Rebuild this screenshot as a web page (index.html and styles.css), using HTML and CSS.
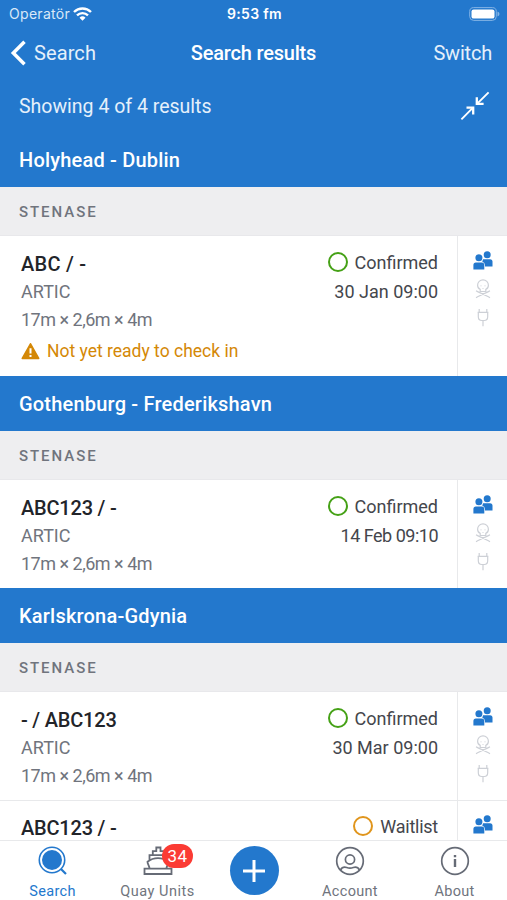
FILE: index.html
```html
<!DOCTYPE html>
<html lang="en">
<head>
<meta charset="utf-8">
<title>Search results</title>
<link rel="stylesheet" href="styles.css">
</head>
<body>
<svg class="sprite" width="0" height="0" aria-hidden="true">
  <symbol id="people" viewBox="0 0 20 19">
    <circle cx="14.2" cy="3.7" r="3.5"/>
    <path d="M9.6 8.3h7.4a2.5 2.5 0 0 1 2.5 2.5v4.7H9z"/>
    <circle class="cut" cx="5.9" cy="7" r="4.3"/>
    <path class="cut" d="M0 19v-5a3.6 3.6 0 0 1 3-3.2h6a3.6 3.6 0 0 1 3 3.2v5z"/>
    <circle cx="5.9" cy="6.8" r="3.5"/>
    <path d="M.4 18.6v-4.7a2.5 2.5 0 0 1 2.5-2.5h5.9a2.5 2.5 0 0 1 2.5 2.5v4.7z"/>
  </symbol>
  <symbol id="skull" viewBox="0 0 16 20">
    <path d="M5.2 10.4C3.4 9.6 2.6 8 2.6 6.2a5.4 5.4 0 0 1 10.8 0c0 1.8-.8 3.4-2.6 4.2v2.1H5.2zM6 6.5v.8M10 6.5v.8M8 9v.8M1 11.8l1.6.8 10.8 5.2 1.6.9M15 11.8l-1.6.8-10.8 5.2-1.6.9"/>
  </symbol>
  <symbol id="plug" viewBox="0 0 16 20">
    <path d="M4.2 1v3.3M11.8 1v3.3M2.6 4.4h10.8M3.3 4.4v4.1c0 2.5 1.5 4 3.5 4h2.4c2 0 3.5-1.5 3.5-4V4.4M8 12.5v5.8"/>
  </symbol>
</svg>
<div class="screen">
  <header class="top">
    <div class="status">
      <div class="carrier"><span>Operatör</span>
        <svg width="19" height="14" viewBox="0 0 19 14"><g fill="none" stroke="#fff" stroke-width="2.4"><path d="M1 5a12.2 12.2 0 0 1 17 0M4 8.3a8 8 0 0 1 11 0"/></g><path fill="#fff" d="M6.5 10.7a4.4 4.4 0 0 1 6 0l-3 3z"/></svg>
      </div>
      <span class="clock">9:53 fm</span>
      <svg class="battery" width="31" height="14" viewBox="0 0 31 14"><rect x=".7" y=".6" width="26.6" height="12.8" rx="4" fill="none" stroke="#83b3e5"/><rect x="2.5" y="2.4" width="23" height="9.2" rx="2.2" fill="#fff"/><path fill="#83b3e5" d="M28.5 4.5q2 .7 2 2.5t-2 2.5z"/></svg>
    </div>
    <nav class="nav">
      <div class="back"><svg width="18" height="26" viewBox="0 0 18 26"><path d="M14.5 1.8 3.3 13l11.2 11.2" fill="none" stroke="#fff" stroke-width="3.5"/></svg><span>Search</span></div>
      <h1>Search results</h1>
      <span class="switch">Switch</span>
    </nav>
    <div class="summary"><span>Showing 4 of 4 results</span>
      <svg width="30" height="30" viewBox="0 0 30 30" fill="none" stroke="#fff"><path stroke-width="1.9" d="M1.4 28.3 13 16.7M28.6 1.3 17 12.9"/><path stroke-width="2.3" d="M6.5 16.7h6.7v6.7M16.8 6.2v6.7h6.8"/></svg>
    </div>
  </header>
  <main class="results">
    <h2>Holyhead - Dublin</h2>
    <h3>STENASE</h3>
    <article class="booking warned">
      <div class="unit"><b class="short">ABC / -</b><span class="kind">ARTIC</span><span class="dims">17m × 2,6m × 4m</span>
        <div class="warning"><svg width="19" height="18" viewBox="0 0 19 18"><path d="M9.5 1.8 17.7 16.4H1.3z" fill="#d48806" stroke="#d48806" stroke-width="1.6" stroke-linejoin="round"/><path d="M9.5 6.2v5.2M9.5 13v2" stroke="#fff" stroke-width="2"/></svg><span>Not yet ready to check in</span></div>
      </div>
      <div class="state"><div class="status-line"><i class="ring"></i><span>Confirmed</span></div><span class="date">30 Jan 09:00</span></div>
      <div class="flags"><svg class="people"><use href="#people"/></svg><svg class="off"><use href="#skull"/></svg><svg class="off"><use href="#plug"/></svg></div>
    </article>
    <h2>Gothenburg - Frederikshavn</h2>
    <h3>STENASE</h3>
    <article class="booking">
      <div class="unit"><b>ABC123 / -</b><span class="kind">ARTIC</span><span class="dims">17m × 2,6m × 4m</span></div>
      <div class="state"><div class="status-line"><i class="ring"></i><span>Confirmed</span></div><span class="date narrow">14 Feb 09:10</span></div>
      <div class="flags"><svg class="people"><use href="#people"/></svg><svg class="off"><use href="#skull"/></svg><svg class="off"><use href="#plug"/></svg></div>
    </article>
    <h2>Karlskrona-Gdynia</h2>
    <h3>STENASE</h3>
    <article class="booking">
      <div class="unit"><b>- / ABC123</b><span class="kind">ARTIC</span><span class="dims">17m × 2,6m × 4m</span></div>
      <div class="state"><div class="status-line"><i class="ring"></i><span>Confirmed</span></div><span class="date">30 Mar 09:00</span></div>
      <div class="flags"><svg class="people"><use href="#people"/></svg><svg class="off"><use href="#skull"/></svg><svg class="off"><use href="#plug"/></svg></div>
    </article>
    <article class="booking next">
      <div class="unit"><b>ABC123 / -</b></div>
      <div class="state"><div class="status-line"><i class="ring waiting"></i><span class="wait">Waitlist</span></div></div>
      <div class="flags"><svg class="people"><use href="#people"/></svg></div>
    </article>
  </main>
  <footer class="tabs">
    <div class="tab active"><svg width="30" height="30" viewBox="0 0 30 30"><circle cx="14" cy="14" r="12.7" fill="none" stroke="#2378cd" stroke-width="1.6"/><circle cx="14" cy="14" r="10" fill="#2378cd"/><path d="m23 23 5 5" stroke="#2378cd" stroke-width="2.2"/></svg><span>Search</span></div>
    <div class="tab quay"><svg width="30" height="30" viewBox="0 0 30 30" fill="none" stroke="#666b76" stroke-width="1.8"><path d="M1.5 22.7h27v5.3h-27zM6.5 22.4c0-2.6-2-4-2-6.6 3.2-2.6 6.8-3.7 10.5-3.7s7.3 1.1 10.5 3.7c0 2.6-2 4-2 6.6M6.5 14V9.2h3.3V5.2h3.5V1.5h4.2v3.7H21v4h3.5V14M9.8 9.2H21"/></svg><em class="badge">34</em><span>Quay Units</span></div>
    <div class="add"><svg width="24" height="24" viewBox="0 0 24 24"><path d="M12 1v22M1 12h22" stroke="#fff" stroke-width="3"/></svg></div>
    <div class="tab"><svg width="30" height="30" viewBox="0 0 30 30" fill="none" stroke="#666b76" stroke-width="1.7"><circle cx="15" cy="15" r="13.3"/><circle cx="15" cy="13.5" r="4.6"/><path d="M5.5 24c1.2-2.2 3.6-3.4 6.2-2.5 2.2.8 4.4.8 6.6 0 2.6-.9 5 .3 6.2 2.5"/></svg><span>Account</span></div>
    <div class="tab"><svg width="30" height="30" viewBox="0 0 30 30" fill="none" stroke="#666b76"><circle cx="15" cy="15" r="13.3" stroke-width="1.7"/><path d="M15 9v2.2M15 13v8" stroke-width="2.4"/></svg><span>About</span></div>
  </footer>
</div>
</body>
</html>
```
FILE: styles.css
```css
* { box-sizing: border-box; }
body { margin: 0; font-family: Roboto, "Liberation Sans", sans-serif; color: #44464c; background: #fff; }
.sprite { position: absolute; }
.screen { width: 507px; height: 900px; display: flex; flex-direction: column; overflow: hidden; }
svg { display: block; flex: none; }
span, b, h1, h2, h3 { white-space: nowrap; }
.top { height: 132px; flex: none; background: #2378cd; color: #fff; }
.status { height: 27px; display: grid; grid-template-columns: 1fr auto 1fr; align-items: center; padding: 0 7px 0 9px; font-family: Inter, sans-serif; }
.carrier { display: flex; align-items: center; gap: 3px; font-size: 14px; letter-spacing: .3px; color: #d9e8f8; }
.clock { font-size: 14px; font-weight: 600; letter-spacing: .35px; }
.battery { justify-self: end; }
.nav { height: 51px; display: grid; grid-template-columns: 1fr auto 1fr; align-items: center; padding: 0 15px; }
.back { display: flex; align-items: center; gap: 6px; margin-left: -5px; font-size: 20px; letter-spacing: .1px; color: #e5f0fb; }
.switch { justify-self: end; font-size: 20px; letter-spacing: -.2px; color: #e5f0fb; }
h1 { margin: 0; font-size: 20px; font-weight: 500; letter-spacing: -.2px; }
.summary { height: 54px; display: flex; align-items: center; justify-content: space-between; padding: 2px 17px 0 19px; font-size: 19.5px; color: #e5f0fb; }
.results { height: 708px; flex: none; overflow: hidden; }
h2 { height: 55px; margin: 0; padding-left: 19px; background: #2378cd; color: #fff; font-size: 20px; font-weight: 500; line-height: 56px; letter-spacing: .2px; }
h3 { height: 49px; margin: 0; padding-left: 19px; background: #eeeef0; color: #70747d; font-size: 15px; font-weight: 500; line-height: 50px; letter-spacing: 1.95px; border-bottom: 1px solid #e8e8eb; }
.booking { height: 108px; display: flex; }
.warned { height: 140px; }
.next { border-top: 1px solid #e8e9eb; }
.next .unit { padding-top: 13px; }
.next .state { padding-top: 10px; }
.next .flags { padding-top: 14px; }
.unit { flex: 1; display: flex; flex-direction: column; padding: 14px 0 0 21px; color: #70747d; font-size: 18px; }
.unit b { font-size: 20px; font-weight: 500; line-height: 28px; letter-spacing: -.2px; color: #222429; }
.unit .short { letter-spacing: .25px; }
.kind { line-height: 28px; }
.dims { line-height: 27px; letter-spacing: -.5px; }
.warning { height: 36px; display: flex; align-items: center; gap: 7px; color: #d48806; font-size: 17.5px; }
.state { display: flex; flex-direction: column; align-items: flex-end; padding: 11px 19px 0 0; font-size: 18px; }
.status-line { height: 30px; display: flex; align-items: center; gap: 7px; }
.ring { width: 20px; height: 20px; border: 2px solid #45a116; border-radius: 50%; }
.waiting { border-color: #e0951c; }
.wait { letter-spacing: -.25px; }
.date { line-height: 30px; }
.narrow { letter-spacing: -.5px; }
.flags { width: 50px; border-left: 1px solid #e8e9eb; display: flex; flex-direction: column; align-items: center; gap: 9px; padding-top: 15px; }
.people { width: 20px; height: 19px; fill: #2378cd; }
.cut { fill: #fff; }
.off { width: 16px; height: 20px; fill: none; stroke: #cdd0d6; stroke-width: 1.2; }
.tabs { height: 60px; flex: none; display: grid; grid-template-columns: 105px 105px 88px 104px 105px; border-top: 1px solid #e8e9eb; background: #fff; }
.tab { position: relative; display: flex; flex-direction: column; align-items: center; padding-top: 5px; gap: 6px; font-size: 14.5px; letter-spacing: .3px; color: #70747d; }
.quay { letter-spacing: .5px; }
.tab span { line-height: 19px; }
.active { color: #2378cd; }
.badge { position: absolute; left: 57px; top: 3px; width: 31px; height: 24px; border-radius: 12px; background: #fb3b34; color: #fff; font-size: 17px; font-style: normal; line-height: 24px; text-align: center; }
.add { width: 49px; height: 49px; margin-top: 5px; justify-self: center; display: grid; place-items: center; border-radius: 50%; background: #2378cd; }
```
